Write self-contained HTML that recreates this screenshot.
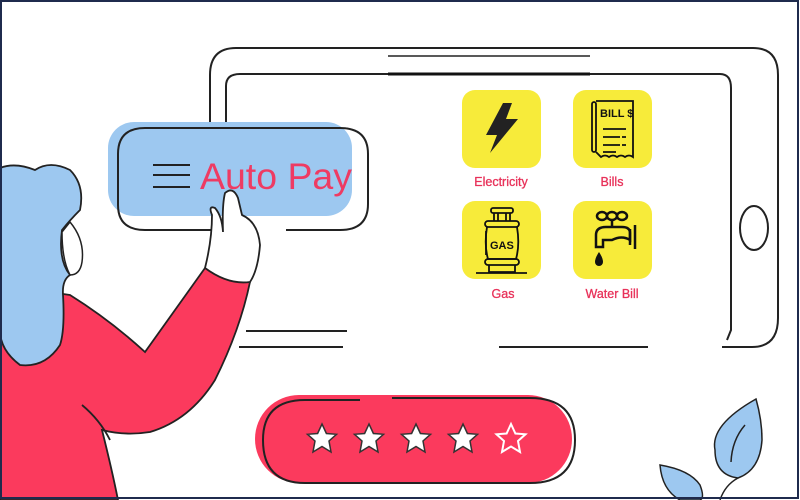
<!DOCTYPE html>
<html><head><meta charset="utf-8"><style>
html,body{margin:0;padding:0;background:#fff}
svg{display:block}
text{font-family:"Liberation Sans",sans-serif}
</style></head><body>
<svg width="800" height="500" viewBox="0 0 800 500" xmlns="http://www.w3.org/2000/svg">
<rect x="0" y="0" width="800" height="500" fill="#fff"/>
<!-- tablet -->
<path d="M236 48 H753 Q778 48 778 75 V318 Q778 347 752 347 H722" fill="none" stroke="#222" stroke-width="2"/>
<path d="M210 130 V75 Q210 48 236 48" fill="none" stroke="#222" stroke-width="2"/>
<path d="M226 130 V86 Q226 74 240 74 H720 Q731 74 731 88 V330 L727 340" fill="none" stroke="#222" stroke-width="2"/>
<line x1="388" y1="56" x2="590" y2="56" stroke="#222" stroke-width="1.5"/>
<line x1="388" y1="74" x2="590" y2="74" stroke="#111" stroke-width="3"/>
<ellipse cx="754" cy="228" rx="14" ry="22" fill="none" stroke="#222" stroke-width="2"/>
<line x1="499" y1="347" x2="648" y2="347" stroke="#222" stroke-width="2"/>
<line x1="246" y1="331" x2="347" y2="331" stroke="#222" stroke-width="2"/>
<line x1="239" y1="347" x2="343" y2="347" stroke="#222" stroke-width="2"/>
<!-- icons -->
<rect x="462" y="90" width="79" height="78" rx="13" fill="#f7eb3a"/>
<rect x="573" y="90" width="79" height="78" rx="13" fill="#f7eb3a"/>
<rect x="462" y="201" width="79" height="78" rx="13" fill="#f7eb3a"/>
<rect x="573" y="201" width="79" height="78" rx="13" fill="#f7eb3a"/>
<path d="M503 103 L486 135 L497 135 L490 153 L518 119 L506 119 L512 103 Z" fill="#222"/>
<g fill="none" stroke="#111" stroke-width="1.8">
<rect x="592" y="102" width="4" height="50" rx="2"/>
<path d="M596 101 H633 V157 Q629 154 625 157 Q621 154 617 157 Q613 154 609 157 Q605 154 601 157 L596 152"/>
<path d="M603 129 H626 M603 137 H620 M622 137 H626 M603 145 H620 M622 145 H626 M603 152 H616"/>
</g>
<text x="600" y="117" font-size="11" font-weight="bold" fill="#111">BILL $</text>
<g fill="none" stroke="#111" stroke-width="1.8">
<rect x="491" y="208" width="22" height="5" rx="2"/>
<path d="M494 213 V221 M510 213 V221 M498 213 V221 M506 213 V221"/>
<rect x="485" y="221" width="34" height="6" rx="3"/>
<path d="M487 227 Q484 245 488 259 H516 Q520 245 517 227"/>
<rect x="485" y="259" width="34" height="6" rx="3"/>
<path d="M489 265 V272 H515 V265"/>
<path d="M476 273 H527"/>
<path d="M486 231 V255"/>
</g>
<text x="490" y="249" font-size="11" font-weight="bold" fill="#111">GAS</text>
<g fill="none" stroke="#111" stroke-width="2.5">
<ellipse cx="602" cy="216" rx="5" ry="4"/><ellipse cx="612" cy="216" rx="5" ry="4"/><ellipse cx="622" cy="216" rx="5" ry="4"/>
<path d="M612 220 V227"/>
<path d="M596 247 V235 Q596 227 606 227 H622 Q630 227 630 233 V240 Q622 235 612 240 H603 V247 Z"/>
<path d="M630 229 V245 M635 225 V249"/>
</g>
<path d="M599 252 Q595 258 595 262 A4 4 0 0 0 603 262 Q603 258 599 252 Z" fill="#111"/>
<g font-size="12.5" fill="#e8325a" text-anchor="middle" stroke="#e8325a" stroke-width="0.3">
<text x="501" y="186">Electricity</text>
<text x="612" y="186">Bills</text>
<text x="503" y="298">Gas</text>
<text x="612" y="298">Water Bill</text>
</g>
<!-- auto pay -->
<rect x="108" y="122" width="244" height="94" rx="26" fill="#9dc8f0"/>
<path d="M230 230 H145 Q118 230 118 205 V154 Q118 128 145 128 H340 Q368 128 368 154 V204 Q368 230 340 230 H286" fill="none" stroke="#222" stroke-width="2"/>
<path d="M153 165 H190 M153 175 H190 M153 187 H190" stroke="#222" stroke-width="2"/>
<text x="200" y="189" font-size="37" fill="#ee3b63" textLength="152" lengthAdjust="spacingAndGlyphs">Auto Pay</text>
<!-- person -->
<path d="M0 300 Q40 290 70 295 Q110 320 145 352 L205 268 L250 282 Q240 330 215 380 Q190 420 150 432 Q125 436 102 430 Q112 470 118 500 H0 Z" fill="#fb3a5d" stroke="#222" stroke-width="1.8"/>
<path d="M205 268 Q212 240 212 215 Q208 205 215 208 Q222 216 223 232 Q222 205 225 193 Q233 186 238 198 L242 215 Q258 222 260 245 Q258 270 250 282 Q228 285 205 268 Z" fill="#fff" stroke="#222" stroke-width="1.8"/>
<path d="M0 168 Q15 162 35 170 Q50 160 70 170 Q85 185 80 210 Q70 220 62 230 Q58 260 70 275 Q62 280 63 295 Q65 330 60 345 Q45 368 20 365 Q0 350 0 330 Z" fill="#9dc8f0" stroke="#222" stroke-width="1.8"/>
<path d="M70 222 Q85 240 82 262 Q80 275 70 275 Q62 260 62 232 Z" fill="#fff" stroke="#222" stroke-width="1.5"/>
<path d="M82 405 Q100 420 110 440" fill="none" stroke="#222" stroke-width="1.8"/>
<!-- rating -->
<rect x="255" y="395" width="317" height="88" rx="44" fill="#fb3a5d"/>
<path d="M360 400 H305 Q263 400 263 440 Q263 483 305 483 H530 Q575 483 575 440 Q575 398 530 398 H392" fill="none" stroke="#222" stroke-width="2"/>
<g fill="#fff" stroke="#333" stroke-width="1.5">
<path d="M0 -15 L4.4 -5.5 L14.5 -4.7 L7 2 L9 13 L0 7.5 L-9 13 L-7 2 L-14.5 -4.7 L-4.4 -5.5 Z" transform="translate(322,439)"/>
<path d="M0 -15 L4.4 -5.5 L14.5 -4.7 L7 2 L9 13 L0 7.5 L-9 13 L-7 2 L-14.5 -4.7 L-4.4 -5.5 Z" transform="translate(369,439)"/>
<path d="M0 -15 L4.4 -5.5 L14.5 -4.7 L7 2 L9 13 L0 7.5 L-9 13 L-7 2 L-14.5 -4.7 L-4.4 -5.5 Z" transform="translate(416,439)"/>
<path d="M0 -15 L4.4 -5.5 L14.5 -4.7 L7 2 L9 13 L0 7.5 L-9 13 L-7 2 L-14.5 -4.7 L-4.4 -5.5 Z" transform="translate(463,439)"/>
</g>
<path d="M0 -15 L4.4 -5.5 L14.5 -4.7 L7 2 L9 13 L0 7.5 L-9 13 L-7 2 L-14.5 -4.7 L-4.4 -5.5 Z" transform="translate(511,439)" fill="#fb3a5d" stroke="#fff" stroke-width="2"/>
<!-- leaves -->
<path d="M756 399 Q710 425 715 450 Q715 475 738 478 Q760 470 762 440 Q762 420 756 399 Z" fill="#9dc8f0" stroke="#222" stroke-width="1.5"/>
<path d="M745 425 Q732 440 731 462" fill="none" stroke="#222" stroke-width="1.5"/>
<path d="M660 465 Q690 470 700 485 Q705 498 700 500 H680 Q662 490 660 465 Z" fill="#9dc8f0" stroke="#222" stroke-width="1.5"/>
<path d="M738 478 Q725 485 720 500" fill="none" stroke="#222" stroke-width="1.5"/>
<!-- frame -->
<rect x="1" y="1" width="797" height="497" fill="none" stroke="#1f2b4d" stroke-width="2"/>
</svg>
</body></html>
